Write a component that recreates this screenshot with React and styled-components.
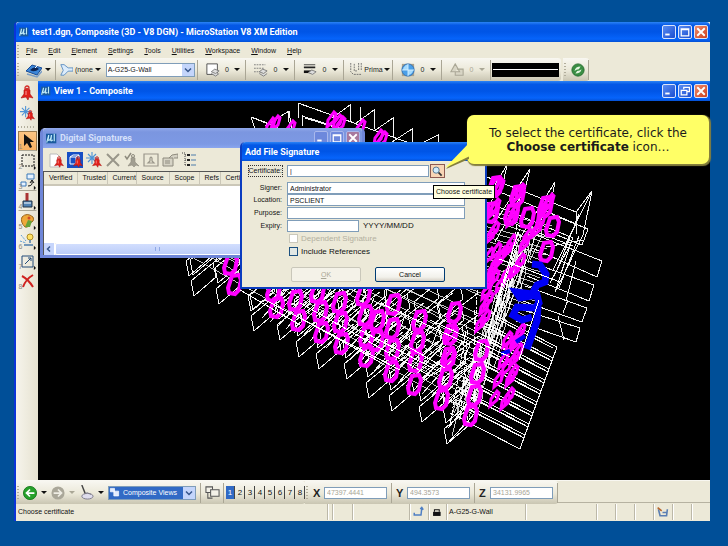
import React from "react";
import styled, { createGlobalStyle } from "styled-components";

const GlobalStyle = createGlobalStyle`
  * {
    box-sizing: border-box;
  }
  body {
    margin: 0;
    background: #004f98;
    font-family: "Liberation Sans", Arial, sans-serif;
    font-size: 8px;
    line-height: 10px;
    color: #111;
  }
  button,
  input,
  select {
    font: inherit;
    color: inherit;
    margin: 0;
    padding: 0;
  }
`;

const Desktop = styled.div`
  display: flex;
  min-height: 100vh;
  padding: 22px 18px 25px 14px;
`;

const AppWindow = styled.div`
  display: flex;
  flex-direction: column;
  flex: 1;
  min-width: 0;
  background: #ece9d8;
  border-left: 2px solid #0a34d8;
  border-radius: 4px 0 0 0;
`;

const TitleBar = styled.div`
  display: flex;
  align-items: center;
  gap: 3px;
  flex: none;
  height: ${(p) => p.$height || 20}px;
  padding: 0 2px 0 3px;
  color: ${(p) => (p.$inactive ? "#d6e0fa" : "#fff")};
  font-family: Roboto, "Noto Sans", sans-serif;
  font-size: 9px;
  font-weight: 700;
  line-height: 12px;
  white-space: nowrap;
  border-radius: ${(p) => (p.$square ? "0" : "4px 4px 0 0")};
  background: ${(p) =>
    p.$inactive
      ? "linear-gradient(#90a8ea, #7b96e0 20%, #7d99e4 80%, #8ba6ee)"
      : "linear-gradient(#2b84f6, #0458e6 16%, #0055e6 50%, #0664fb 85%, #0450d4)"};
`;

const TitleText = styled.span`
  flex: 1;
`;

const CaptionButton = styled.button`
  display: grid;
  place-items: center;
  width: 14px;
  height: 14px;
  border: 1px solid ${(p) => (p.$faded ? "#a9b8ec" : "#dbe5fb")};
  border-radius: 2px;
  background: ${(p) => {
    if (p.$close) return p.$faded ? "#a7799f" : "linear-gradient(135deg, #ef8c6c, #d0401f)";
    return p.$faded ? "#6d88dc" : "linear-gradient(135deg, #5a8df2, #1a4dd0)";
  }};
`;

const CaptionButtons = styled.div`
  display: flex;
  gap: 2px;
`;

const MenuBar = styled.nav`
  display: flex;
  align-items: center;
  height: 16px;
  padding-top: 2px;
  font-size: 7px;
`;

const MenuLinks = styled.div`
  display: flex;
  gap: 11px;
  padding-left: 6px;
`;

const MenuLink = styled.a`
  color: #111;
  text-decoration: none;
`;

const Grip = styled.span`
  flex: none;
  width: 2px;
  height: 13px;
  margin: 0 1px;
  background: repeating-linear-gradient(#b2ae9c 0 1px, transparent 1px 3px);
`;

const TopBar = styled.div`
  display: flex;
  gap: 2px;
  height: 23px;
`;

const Strip = styled.div`
  display: flex;
  align-items: center;
  height: 23px;
  border-radius: 0 3px 3px 0;
  background: linear-gradient(#f8f7f1, #ebe8d8 55%, #c9c5b2);
`;

const Group = styled.div`
  display: flex;
  align-items: center;
  width: ${(p) => p.$width}px;
  height: 20px;
  padding-left: ${(p) => p.$pad ?? 4}px;
  gap: ${(p) => p.$gap ?? 3}px;
  border-right: 1px solid #aaa695;
  color: ${(p) => (p.$off ? "#aaa796" : "#222")};
`;

const ToolButton = styled.button`
  display: flex;
  flex: ${(p) => (p.$grow ? "1" : "none")};
  align-items: center;
  justify-content: ${(p) => (p.$grow ? "space-evenly" : "center")};
  border: 0;
  background: none;
  white-space: nowrap;
  font-size: 7px;
`;

const Caret = styled.i`
  border: 3px solid transparent;
  border-top-color: ${(p) => (p.$off ? "#aaa796" : "#111")};
  border-bottom: 0;
`;

const SelectBox = styled.div`
  display: grid;
  grid-template-columns: 14px 1fr 12px;
  align-items: center;
  width: ${(p) => p.$width}px;
  height: 14px;
  border: 1px solid #7f9db9;
  background: ${(p) => (p.$picked ? "#316ac5" : "#fff")};
  color: ${(p) => (p.$picked ? "#fff" : "#222")};
  svg {
    grid-area: 1 / 1;
    pointer-events: none;
  }
  svg:last-child {
    grid-area: 1 / 3;
  }
`;

const Select = styled.select`
  grid-area: 1 / 1 / 2 / 4;
  width: 100%;
  height: 12px;
  padding-left: ${(p) => p.$pad || 1}px;
  border: 0;
  background: none;
  appearance: none;
  font-size: 7px;
`;

const LineStyle = styled.div`
  display: flex;
  align-items: center;
  width: 67px;
  height: 14px;
  margin: 0 2px 0 1px;
  padding: 0 1px;
  background: #000;
  &::after {
    content: "";
    flex: 1;
    height: 1px;
    background: #fff;
  }
`;

const Body = styled.div`
  display: flex;
  flex: 1;
`;

const Tools = styled.aside`
  display: flex;
  flex-direction: column;
  align-items: center;
  width: 22px;
  padding-top: 2px;
  background: linear-gradient(90deg, #f6f4ec, #e6e2d0);
`;

const Tool = styled.button`
  display: grid;
  align-items: center;
  justify-items: center;
  width: 19px;
  height: 20px;
  border: 1px solid ${(p) => (p.$active ? "#9a7a4d" : "transparent")};
  border-bottom-color: ${(p) => (p.$line || p.$active ? "#aaa695" : "transparent")};
  background: ${(p) => (p.$active ? "linear-gradient(#fcc583, #f9b162)" : "none")};
  svg {
    grid-area: 1 / 1;
  }
`;

const ToolNumber = styled.span`
  grid-area: 1 / 1;
  place-self: end start;
  font-size: 7px;
  line-height: 7px;
  color: #8d8a7c;
`;

const ToolGrip = styled.span`
  width: 18px;
  height: 2px;
  margin: 3px 0;
  background: repeating-linear-gradient(90deg, #b2ae9c 0 1px, transparent 1px 3px);
`;

const View = styled.main`
  position: relative;
  display: flex;
  flex-direction: column;
  flex: 1;
  min-width: 0;
  background: #000;
`;

const Drawing = styled.svg`
  flex: 1;
  width: 100%;
  min-height: 379px;
`;

const Dialog = styled.section`
  position: absolute;
  left: ${(p) => p.$left}px;
  top: ${(p) => p.$top}px;
  width: ${(p) => p.$width}px;
  border: solid ${(p) => (p.$inactive ? "#6f86d8" : "#0b3cc0")};
  border-width: 0 ${(p) => (p.$inactive ? "3px 3px" : "2px 2px")};
  border-radius: 5px 5px 0 0;
  background: #ece9d8;
`;

const SignatureTools = styled.div`
  display: flex;
  align-items: center;
  gap: 3px;
  height: 23px;
  padding: 0 5px;
`;

const ListBox = styled.div`
  height: 84px;
  border: 1px solid #555;
  border-width: 1px 0 0 1px;
  background: #fff;
  display: flex;
  flex-direction: column;
  justify-content: space-between;
`;

const HeaderTable = styled.table`
  width: 100%;
  border-collapse: collapse;
  table-layout: fixed;
  font-size: 7px;
  background: #ece9d8;
  border-bottom: 2px solid #cbc7b8;
`;

const HeaderCell = styled.th`
  width: ${(p) => p.$width}px;
  height: 13px;
  padding: 0 0 0 5px;
  overflow: hidden;
  font-weight: 400;
  text-align: left;
  border-right: 1px solid #cbc7b8;
`;

const ScrollBar = styled.div`
  display: flex;
  height: 12px;
  background: #f3f2ec;
`;

const ScrollEnd = styled.button`
  display: grid;
  place-items: center;
  width: 11px;
  border: 0;
  border-right: 1px solid #fff;
  background: #c6d5fc;
`;

const Thumb = styled.div`
  flex: 1;
  display: grid;
  place-items: center;
  border: 1px solid #fff;
  border-radius: 2px;
  background: linear-gradient(#d2defe, #bccdf9);
`;

const ThumbGrip = styled.span`
  width: 5px;
  height: 4px;
  margin-right: 102px;
  border: solid #8fa8e6;
  border-width: 0 1px;
`;

const Form = styled.form`
  padding: 3px 6px 5px 3px;
`;

const Field = styled.div`
  display: grid;
  grid-template-columns: 37px 1fr;
  align-items: center;
  gap: 5px;
  height: ${(p) => p.$height || 13}px;
  margin-bottom: ${(p) => p.$after || 0}px;
`;

const Label = styled.label`
  justify-self: end;
  font-size: 7px;
  white-space: nowrap;
  outline: ${(p) => (p.$focus ? "1px dotted #333" : "none")};
`;

const FieldBody = styled.div`
  display: flex;
  align-items: center;
  gap: 4px;
`;

const TextInput = styled.input`
  width: ${(p) => p.$width}px;
  height: 12px;
  padding: 0 2px;
  border: 1px solid #7f9db9;
  background: #fff;
  font-size: 7px;
  color: ${(p) => (p.$dim ? "#a8a595" : "#111")};
`;

const PickButton = styled.button`
  display: grid;
  place-items: center;
  width: 15px;
  height: 14px;
  margin-left: -3px;
  border: 1px solid #8d5a52;
  background: #f8d5b5;
`;

const CheckRow = styled.label`
  display: flex;
  align-items: center;
  gap: 3px;
  height: 13px;
  padding-left: 44px;
  color: ${(p) => (p.$off ? "#b3b0a0" : "#111")};
`;

const CheckBox = styled.input`
  appearance: none;
  width: 9px;
  height: 9px;
  border: 1px solid ${(p) => (p.disabled ? "#cac8bb" : "#1c5180")};
  background: ${(p) => (p.disabled ? "#fff" : "#e2e8e4")};
`;

const Actions = styled.div`
  display: flex;
  justify-content: center;
  gap: 14px;
  padding: 9px 0 0 12px;
`;

const ActionButton = styled.button`
  width: 70px;
  height: 15px;
  border: 1px solid ${(p) => (p.disabled ? "#c9c7ba" : "#003c74")};
  border-radius: 2px;
  background: ${(p) => (p.disabled ? "#f4f2e8" : "linear-gradient(#fff, #f2f1eb 70%, #d6d0c5)")};
  color: ${(p) => (p.disabled ? "#aaa796" : "#111")};
  font-size: 7px;
`;

const Tooltip = styled.div`
  position: absolute;
  left: 395px;
  top: 104px;
  padding: 1px 2px;
  border: 1px solid #000;
  background: #ffffe1;
  font-size: 7px;
  white-space: nowrap;
`;

const Callout = styled.div`
  position: absolute;
  left: 429px;
  top: 34px;
  width: 242px;
  padding: 11px 0 10px;
  border-radius: 7px;
  background: #ffff66;
  box-shadow: 1px 1px 1px 1px #857f3c;
  font-family: "DejaVu Sans", Verdana, sans-serif;
  font-size: 12px;
  line-height: 14px;
  text-align: center;
  color: #1b1b1b;
`;

const CalloutTail = styled.svg`
  position: absolute;
  left: 406px;
  top: 60px;
`;

const BottomBar = styled.div`
  display: flex;
  height: 23px;
  border-top: 1px solid #f8f7f1;
  border-bottom: 1px solid #b6b2a1;
`;

const ViewNumbers = styled.div`
  display: flex;
  gap: 1px;
  margin: 0 0 0 2px;
`;

const ViewNumber = styled.button`
  width: 9px;
  height: 13px;
  border: 0;
  border-right: 1px solid #444;
  background: ${(p) => (p.$on ? "#316ac5" : "none")};
  color: ${(p) => (p.$on ? "#fff" : "#111")};
`;

const AxisLabel = styled.label`
  width: 11px;
  font-size: 11px;
  font-weight: 700;
`;

const StatusBar = styled.footer`
  display: flex;
  align-items: center;
  height: 18px;
  padding-left: 2px;
  font-size: 7px;
`;

const StatusText = styled.span`
  flex: 1;
`;

const StatusCell = styled.span`
  display: grid;
  place-items: center start;
  width: ${(p) => p.$width}px;
  height: 16px;
  padding-left: 2px;
  border-left: 1px solid #bcb8a8;
  box-shadow: inset 1px 0 #fff;
`;

const bell = (
  <g>
    <path d="M2 13 5 9 5 5 8 3 11 5 11 9 14 13 10 12 9 15 7 12Z" fill="#e0201b" stroke="#a81210" strokeWidth=".6" />
    <circle cx="8" cy="3" r="2" fill="none" stroke="#d42a26" strokeWidth="1.3" />
    <path d="M7 6v4" stroke="#f99" />
  </g>
);
const smallBell = <g transform="translate(5 4) scale(.75)">{bell}</g>;
const burst = <path d="M6 0v12M0 6h12M2 2l8 8M10 2 2 10" stroke="#4d93d6" strokeWidth="1.1" />;

const icons = {
  app: (
    <g>
      <path d="M0 1h15v14H0z" fill="#1a5b9e" />
      <path d="M1 14 4 3M4 3 3 10c2 2 4-1 5-7M8 3l-1 8c1 1 2 0 3-1M12 1v11" fill="none" stroke="#bfeaf8" strokeWidth="1.7" />
    </g>
  ),
  model: (
    <g>
      <path d="m0 9 6-6 10 3-5 7z" fill="#3c86d8" stroke="#1a4c95" />
      <path d="m1 12 10 3 5-6" fill="none" stroke="#7b9ec6" strokeWidth="1.5" />
      <path d="M4 8q5-5 9-1-5 4-9 1" fill="#0c2454" />
      <path d="m9 6 3-3" stroke="#fff" />
    </g>
  ),
  tag: <path d="M1 2h4l5 4h6v4h-6l-5 5H1l3-6z" fill="#dcecfb" stroke="#4c82bd" />,
  level: (
    <g>
      <path d="M1 1h12v12H1z" fill="#fff" stroke="#444" />
      <path d="m6 10 4-3 5 2-4 3zM6 12l5 3 4-3" fill="#ddd" stroke="#777" />
    </g>
  ),
  dashes: (
    <g>
      <path d="M0 2h13M0 6h11M0 10h8" stroke="#777" strokeDasharray="2 1" />
      <path d="m6 10 4-3 5 2-4 3zM6 12l5 3 4-3" fill="#ddd" stroke="#777" />
    </g>
  ),
  weight: (
    <g>
      <path d="M1 2h13" stroke="#333" />
      <path d="M1 5h13" stroke="#222" strokeWidth="2" />
      <path d="M1 10h10" stroke="#111" strokeWidth="3" />
      <path d="m6 11 4-3 5 2-4 3z" fill="#ddd" stroke="#777" />
    </g>
  ),
  klass: <path d="M2 0v10l3 3h9M6 1v8h3M11 0v9M14 0v9" fill="none" stroke="#666" strokeDasharray="2 1" />,
  globe: (
    <g>
      <path d="M1 1h14v14H1z" fill="#a9a18c" />
      <circle cx="8" cy="8" r="7" fill="#4a9fe8" stroke="#2e6fb7" />
      <path d="M3 5q3-4 5-3v6H2zM8 8h6q-1 5-6 6z" fill="#a4dafd" />
      <path d="M8 1v14M1 8h14" stroke="#d8f0ff" />
    </g>
  ),
  priority: <path d="M6 1 1 10h10zM8 7h7v7H6v-4" fill="#d8d5c5" stroke="#aaa796" strokeWidth="1.2" />,
  refresh: (
    <g>
      <circle cx="8" cy="8" r="7" fill="#398d43" stroke="#246b2d" />
      <path d="M4 9q1-5 7-5L9 7q-3 0-5 2M12 7q-1 5-7 5l2-3q3 0 5-2" fill="#e3f6df" />
    </g>
  ),
  bell,
  place: (
    <g>
      {burst}
      {smallBell}
    </g>
  ),
  page: (
    <g>
      <path d="M2 2h7l3 3v10H2z" fill="#fff" stroke="#bbb" />
      {smallBell}
    </g>
  ),
  box: (
    <g>
      <path d="M0 0h16v16H0z" fill="#174fc5" />
      <path d="M3 5h6v7H3zM3 5l3-2h6v6l-3 3M9 5l3-2" fill="none" stroke="#fff" />
      {smallBell}
    </g>
  ),
  cross: <path d="m2 2 12 12M14 2 2 14" stroke="#99968a" strokeWidth="2" />,
  verify: (
    <g stroke="#8e8b7e" fill="#a19e91">
      <path d="m1 4 2 3 4-6" fill="none" strokeWidth="1.5" />
      <path d="m4 14 3-4V6l2-1 2 1v4l4 4-3-1-2 2-2-2z" strokeWidth=".6" />
      <circle cx="9" cy="4" r="1.5" fill="none" />
    </g>
  ),
  frame: <path d="M1 2h14v12H1zM5 11h6L9 9V6L8 5 7 6v3z" fill="none" stroke="#99968a" strokeWidth="1.2" />,
  hand: <path d="M1 6h10v8H1zM3 9h5M3 11h5M7 6l3-3 6-1v4h-4" fill="#d6d3c5" stroke="#8e8b7e" />,
  tree: (
    <g>
      <path d="M1 1h3v13M4 3h3M4 8h3M4 13h3" stroke="#444" strokeDasharray="1 1" />
      <path d="M6 2h3v2H6zM6 7h3v2H6zM6 12h3v2H6z" fill="#222" />
      <path d="M10 3h5M10 8h5M10 13h5" stroke="#4c7caa" />
    </g>
  ),
  arrow: <path d="M5 1v12l3-3 3 5 2-1-2-5h4z" fill="#111" />,
  fence: <path d="M3 2h12v11H3z" fill="none" stroke="#111" strokeDasharray="2 1" />,
  manip: (
    <g fill="none" stroke="#3a78b8">
      <path d="M8 1h7v5H8zM2 9h5v4H2z" fill="#e6f2ff" />
      <path d="M9 13q5 0 4-5m-2 2 2-3 2 3" stroke="#111" />
    </g>
  ),
  brush: (
    <g>
      <path d="M8 0v8" stroke="#a33" strokeWidth="3" />
      <path d="M4 8h9v6H4z" fill="#4f83b5" stroke="#234" />
      <path d="M5 10h7" stroke="#fff" />
    </g>
  ),
  palette: (
    <g>
      <path d="M3 4q5-5 11 0 2 5-4 6 0 5-4 4-5-5-3-10" fill="#efa83a" stroke="#9b651b" />
      <path d="m9 7 4 1-2 6H6z" fill="#66a239" />
      <circle cx="10" cy="5" r="1.5" fill="#cf4b27" />
    </g>
  ),
  bulb: (
    <g>
      <path d="M2 2l5 6M1 8l6 2" stroke="#5e9ed4" strokeDasharray="2 1" />
      <circle cx="11" cy="4" r="3" fill="#ffe267" stroke="#b18d22" />
      <path d="M11 7v3M5 12h9" stroke="#4c7caa" strokeWidth="1.5" />
    </g>
  ),
  measure: <path d="M3 3h11v11H3zM6 11l6-6M9 5h3v3" fill="none" stroke="#234b78" />,
  remove: <path d="M3 3q6 3 11 11M14 2Q7 6 4 14" fill="none" stroke="#cf2320" strokeWidth="2" />,
  flyout: <path d="M14 12v4l2-2z" fill="#111" />,
  search: (
    <g>
      <path d="m9 9 5 5" stroke="#333" strokeWidth="2.5" />
      <circle cx="6" cy="6" r="4.5" fill="#d1ecfb" stroke="#4a6d8a" strokeWidth="1.3" />
    </g>
  ),
  back: (
    <g>
      <circle cx="8" cy="8" r="7.5" fill="#26a12b" stroke="#15771a" />
      <path d="M13 8H4m4-4L4 8l4 4" stroke="#fff" strokeWidth="2" fill="none" />
    </g>
  ),
  forward: (
    <g>
      <circle cx="8" cy="8" r="7.5" fill="#aaa799" />
      <path d="M3 8h9M8 4l4 4-4 4" stroke="#efede4" strokeWidth="2" fill="none" />
    </g>
  ),
  pan: (
    <g fill="none" stroke="#7c7a89">
      <path d="M3 0 7 10" stroke="#444" strokeWidth="1.5" />
      <ellipse cx="9" cy="12" rx="6" ry="3" fill="#dfddec" />
      <path d="m8 8 5 2" />
    </g>
  ),
  views: (
    <g fill="#f3f1e8" stroke="#555" strokeWidth="1.1">
      <path d="M3 7v7h5" fill="none" />
      <path d="M1 2h7v6H1z" />
      <path d="M6 5h9v7H6z" />
    </g>
  ),
  viewsLight: <path d="M2 2h6v5H2zM7 6h7v7H7z" fill="#e2ecff" stroke="#fff" />,
  snap: <path d="M3 12h9l1-9M11 4l2-2 2 3M3 9v4" fill="none" stroke="#4f7fc4" strokeWidth="2" />,
  lock: (
    <g>
      <path d="M3 7h11v6H3z" fill="#111" />
      <path d="M5 7V4h7v3" fill="none" stroke="#111" strokeWidth="1.5" />
    </g>
  ),
  pen: (
    <g>
      <path d="M3 4l2 8h8l1-8M8 8h5" fill="none" stroke="#5b7fb3" strokeWidth="2" />
      <path d="M2 2l5 4" stroke="#b8662c" strokeWidth="2" />
    </g>
  ),
  down: (
    <g>
      <path d="M0 0h16v16H0z" fill="#c4d5fb" />
      <path d="m4 6 4 4 4-4" stroke="#36568c" strokeWidth="2" />
    </g>
  ),
  left: <path d="m10 3-5 5 5 5" fill="none" stroke="#36568c" strokeWidth="3" />,
  minimize: <path d="M2 12h7" stroke="#fff" strokeWidth="3" />,
  maximize: <path d="M2 3h12v11H2zM2 4h12" fill="none" stroke="#fff" strokeWidth="2" />,
  restore: <path d="M6 5V2h9v7h-3M2 7h9v7H2z" fill="none" stroke="#fff" strokeWidth="2" />,
  close: <path d="m2 2 12 12M14 2 2 14" stroke="#fff" strokeWidth="3" />,
};

const Icon = ({ name, size = 14 }) => (
  <svg width={size} height={size} viewBox="0 0 16 16" fill="none" aria-hidden="true">
    {icons[name]}
  </svg>
);

const WindowButtons = ({ middle = "maximize", faded }) => (
  <CaptionButtons>
    {["minimize", middle, "close"].map((name) => (
      <CaptionButton key={name} $close={name === "close"} $faded={faded} aria-label={name}>
        <Icon name={name} size={10} />
      </CaptionButton>
    ))}
  </CaptionButtons>
);

const menus = ["File", "Edit", "Element", "Settings", "Tools", "Utilities", "Workspace", "Window", "Help"];

const attributes = [
  { icon: "level", text: "0" },
  { icon: "dashes", text: "0" },
  { icon: "weight", text: "0" },
  { icon: "klass", text: "Prima" },
  { icon: "globe", text: "0" },
  { icon: "priority", text: "0", off: true },
];

const tools = [
  { icon: "arrow", active: true },
  { icon: "fence" },
  { icon: "manip", line: true },
  { icon: "brush", line: true },
  { icon: "palette" },
  { icon: "bulb" },
  { icon: "measure" },
  { icon: "remove" },
];

const columns = [
  ["Verified", 33],
  ["Trusted", 30],
  ["Current", 29],
  ["Source", 33],
  ["Scope", 30],
  ["Refs", 21],
  ["Certi", 20],
  ["", 122],
];

// Bottom corner of each wall panel along the front facade, and its floor count
const panels = [
  [189, 276, 1], [194, 296, 2], [219, 304, 3], [251, 311, 3], [254, 331, 4], [280, 340, 4],
  [299, 357, 5], [319, 369, 5], [347, 379, 5], [369, 398, 6], [392, 411, 6], [422, 422, 6], [447, 444, 7],
];

// Magenta window frames, one list for each facade bay
const frames = [
  [231, 264], [235, 284], [274, 291], [277, 307], [296, 300], [299, 320],
  [318, 292], [321, 311], [322, 332], [340, 302], [341, 322], [342, 343],
  [364, 295], [366, 315], [367, 336], [367, 356], [378, 320], [377, 340],
  [394, 304], [393, 328], [393, 349], [392, 371], [420, 320], [418, 341], [416, 361], [415, 384],
  [455, 312], [451, 334], [449, 357], [446, 378], [442, 399],
  [482, 350], [478, 373], [475, 395], [471, 415],
  [528, 217], [553, 226], [547, 251], [496, 186], [518, 195], [546, 206], [512, 214], [492, 212],
];

// Slanted frames seen nearly edge on
const slats = [
  [270, 126], [275, 124], [290, 129], [331, 120], [337, 123], [340, 125], [360, 128], [378, 138], [382, 140],
  [494, 186], [499, 187], [516, 196], [520, 192], [546, 206], [542, 211], [549, 202], [492, 211], [495, 207],
  [511, 219], [514, 212], [537, 229], [540, 222], [490, 236], [494, 230], [524, 244], [527, 237],
  [499, 260], [495, 264], [492, 270], [502, 255], [489, 283], [494, 278], [486, 292], [484, 307],
  [488, 300], [480, 324], [485, 318], [517, 338], [520, 332], [514, 344], [514, 359], [518, 352], [510, 379],
  [513, 373], [505, 402], [509, 396], [507, 340], [503, 361], [498, 380], [494, 399], [510, 345], [506, 368],
  [489, 256], [507, 250], [511, 243], [496, 251], [500, 285], [506, 275], [515, 270], [520, 262], [451, 334], [449, 357],
];

const peaks = [
  "M298 118V103L360 125V107M298 103 440 154M302 116l48 15M303 126l-1-11M305 118l42 13M251 117l5 15M251 117l27 10M251 117l37 15",
  "M265 126l24-15M288 111l2 21M289 111l3 20M350 121V105L332 118M374 129V110L356 123M393 137V118L374 131M412 143V129L392 142M438 152V135L422 143",
  "M486 200 507 165 503 184 480 218M495 222 530 169 525 189 495 242M520 238 555 182 551 203 515 262M553 270 592 191 583 235 556 290M592 191 576 212V234",
  "M487 177 576 212M488 187 574 223M487 202 573 238M553 215l35 14-6 16-30-12M487 213 573 246",
  "M536 235 602 261 597 277 532 248M530 262 594 285 589 301 527 276M525 286 587 308 582 322 520 300M520 309 580 328 576 342 516 321",
  "M546 247l37-7M559 288l20-52M555 292l18-55M566 301l10-40M563 313l5-13M564 340l-6-24M570 245l-20 38M579 214l-22 56",
];

const panelPath = panels
  .flatMap(([x, y, floors]) =>
    Array.from({ length: floors }, (_, i) => {
      const px = x - i;
      const py = y - i * 21;
      return `M${px} ${py}l-3-15 22-18 3 14zM${px + 19} ${py - 33}l16-12`;
    })
  )
  .join("");

const slopes = Array.from({ length: 34 }, (_, i) => {
  const k = i / 33;
  const x = 190 + k * 128 + ((i * 7) % 5) * 9;
  const y = 256 - k * 88 + ((i * 5) % 7);
  const ex = k < 0.5 ? 476 + k * 50 : 508 + k * 44;
  const ey = 416 - k * 190;
  return `M${Math.round(x)} ${Math.round(y)}L${Math.round(ex)} ${Math.round(ey)}`;
}).join("");

const rightEnds = Array.from({ length: 9 }, (_, i) => {
  const x = 557 - i * 4;
  const y = 347 + i * 11;
  return `M${x - 72} ${y - 37}L${x} ${y}l-5 14-70-36M${x - 60} ${y - 28}l56 29`;
}).join("");

// Near-parallel risers that bunch up toward the far corner
const risers = Array.from({ length: 48 }, (_, i) => {
  const k = i / 47;
  const x = Math.round(450 + k * 62 + ((i * 7) % 5) * 4);
  const y = Math.round(424 - k * 168);
  return `M${x} ${y}l${6 + (i % 3) * 3}-${24 + (i % 5) * 4}l2 12-${6 + (i % 4) * 2} 24`;
}).join("");

const diagonals = Array.from({ length: 24 }, (_, i) => {
  const x = 262 + i * 8;
  const y = 318 + Math.round(i * 3.8);
  return `M${x} ${y}l34-38 6-16M${x + 4} ${y - 23}l28-22`;
}).join("");

const Wireframe = () => (
  <Drawing viewBox="38 101 672 379" preserveAspectRatio="xMinYMin meet" fill="none" role="img" aria-label="Composite model">
    <g stroke="#f4f4f4" strokeWidth="1" shapeRendering="crispEdges">
      <path d={slopes} strokeWidth=".8" />
      <path d={panelPath} />
      <path d={rightEnds} />
      <path d={diagonals} />
      {peaks.map((d) => (
        <path key={d} d={d} />
      ))}
    </g>
    <g stroke="#fff" shapeRendering="crispEdges">
      <path d={risers} strokeWidth=".8" />
      <path d="M474 310V410M478 280l-7 120M468 330l-8 90M521 222l-20 90M517 225l-13 75M450 425l17-100" strokeDasharray="5 2 2 1" />
      <path d="M447 444l29-32M448 428l28-34" />
    </g>
    <g stroke="#ff00ff" strokeWidth="4">
      {frames.map(([x, y]) => (
        <path key={`${x}-${y}`} d={`M${x - 3} ${y - 8}l7-1 2 5-2 10-4 4-6-1-1-5z`} />
      ))}
      {slats.map(([x, y], i) => (
        <path key={i} d={`M${x - 4} ${y + 7}l1-7 6-8 2 2-2 7z`} strokeWidth="3" />
      ))}
    </g>
    <g stroke="#0000f4" strokeWidth="7">
      <path d="M532 264l8 1 6 9-1 8-8 3-5 9-16-2 4 6 17-3 2 8-4 5-18-1-4 8 9 5 10-3M538 305l-1 16-5 14-5 14" />
      <path d="M510 351l-9 3M525 336l-9 6" strokeWidth="4" />
    </g>
    <g stroke="#fff" shapeRendering="crispEdges">
      <path d="M405 345 445 368M430 320 510 357M380 303 470 345M300 303 430 376M265 300 400 370M499 259 560 282" />
      <path d="M240 290 300 325M300 318 380 362M360 330 440 372M498 300l20-68M494 315l16-50M488 335l14-52M539 300l-20 60" />
    </g>
  </Drawing>
);

const SignatureList = () => (
  <Dialog $left={2} $top={47} $width={325} $inactive aria-label="Digital Signatures">
    <TitleBar $inactive>
      <Icon name="app" size={11} />
      <TitleText>Digital Signatures</TitleText>
      <WindowButtons faded />
    </TitleBar>
    <SignatureTools>
      {["page", "box", "place", "cross", "verify", "frame", "hand", "tree"].map((name) => (
        <ToolButton key={name} aria-label={name}>
          <Icon name={name} size={16} />
        </ToolButton>
      ))}
    </SignatureTools>
    <ListBox>
      <HeaderTable>
        <thead>
          <tr>
            {columns.map(([name, width]) => (
              <HeaderCell key={name} $width={width}>
                {name}
              </HeaderCell>
            ))}
          </tr>
        </thead>
      </HeaderTable>
      <ScrollBar>
        <ScrollEnd aria-label="Scroll left">
          <Icon name="left" size={8} />
        </ScrollEnd>
        <Thumb>
          <ThumbGrip />
        </Thumb>
      </ScrollBar>
    </ListBox>
  </Dialog>
);

const AddSignature = () => (
  <Dialog $left={202} $top={61} $width={247} aria-label="Add File Signature">
    <TitleBar $height={19}>
      <TitleText>Add File Signature</TitleText>
    </TitleBar>
    <Form onSubmit={(e) => e.preventDefault()}>
      <Field $after={4} $height={14}>
        <Label htmlFor="certificate" $focus>Certificate:</Label>
        <FieldBody>
          <TextInput id="certificate" $width={142} defaultValue="|" />
          <PickButton type="button" aria-label="Choose certificate">
            <Icon name="search" size={11} />
          </PickButton>
        </FieldBody>
      </Field>
      <Field $height={12}>
        <Label htmlFor="signer">Signer:</Label>
        <TextInput id="signer" $width={178} defaultValue="Administrator" />
      </Field>
      <Field $height={12}>
        <Label htmlFor="location">Location:</Label>
        <TextInput id="location" $width={178} defaultValue="PSCLIENT" />
      </Field>
      <Field>
        <Label htmlFor="purpose">Purpose:</Label>
        <TextInput id="purpose" $width={178} />
      </Field>
      <Field>
        <Label htmlFor="expiry">Expiry:</Label>
        <FieldBody>
          <TextInput id="expiry" $width={72} />
          <span>YYYY/MM/DD</span>
        </FieldBody>
      </Field>
      <CheckRow $off>
        <CheckBox type="checkbox" disabled />
        Dependent Signature
      </CheckRow>
      <CheckRow>
        <CheckBox type="checkbox" />
        Include References
      </CheckRow>
      <Actions>
        <ActionButton disabled>
          <u>O</u>K
        </ActionButton>
        <ActionButton type="button">Cancel</ActionButton>
      </Actions>
    </Form>
  </Dialog>
);

const Axis = ({ name, value }) => (
  <Group $width={83} $pad={4} $gap={0}>
    <AxisLabel htmlFor={`axis-${name}`}>{name}</AxisLabel>
    <TextInput id={`axis-${name}`} $width={63} $dim defaultValue={value} />
  </Group>
);

const App = () => {
  return (
    <Desktop>
      <GlobalStyle />
      <AppWindow>
        <TitleBar>
          <Icon name="app" size={10} />
          <TitleText>test1.dgn, Composite (3D - V8 DGN) - MicroStation V8 XM Edition</TitleText>
          <WindowButtons />
        </TitleBar>
        <MenuBar>
          <Grip />
          <MenuLinks>
            {menus.map((name) => (
              <MenuLink key={name} href="#">
                <u>{name[0]}</u>
                {name.slice(1)}
              </MenuLink>
            ))}
          </MenuLinks>
        </MenuBar>
        <TopBar>
          <Strip>
            <Grip />
            <Group $width={36} $pad={2}>
              <ToolButton $grow aria-label="Models">
                <Icon name="model" size={16} />
                <Caret />
              </ToolButton>
            </Group>
            <Group $width={142} $gap={5}>
              <ToolButton>
                <Icon name="tag" size={13} />
                &nbsp;(none&nbsp;
                <Caret />
              </ToolButton>
              <SelectBox $width={89}>
                <Select aria-label="Active level">
                  <option>A-G25-G-Wall</option>
                </Select>
                <Icon name="down" size={12} />
              </SelectBox>
            </Group>
            {attributes.map((item) => (
              <Group key={item.icon} $width={item.icon === "level" ? 48 : 49} $off={item.off} $pad={3}>
                <ToolButton $grow aria-label={item.icon}>
                  <Icon name={item.icon} />
                  {item.text}
                  <Caret $off={item.off} />
                </ToolButton>
              </Group>
            ))}
            <LineStyle />
          </Strip>
          <Strip>
            <Grip />
            <Group $width={22}>
              <ToolButton aria-label="Refresh">
                <Icon name="refresh" />
              </ToolButton>
            </Group>
          </Strip>
        </TopBar>
        <Body>
          <Tools>
            <Tool aria-label="Signature">
              <Icon name="bell" size={16} />
            </Tool>
            <Tool aria-label="Place signature">
              <Icon name="place" size={15} />
            </Tool>
            <ToolGrip />
            {tools.map((item, i) => (
              <Tool key={item.icon} $active={item.active} $line={item.line} aria-label={`${i + 1} ${item.icon}`}>
                <Icon name={item.icon} size={16} />
                {i > 0 && i < 7 && <Icon name="flyout" size={17} />}
                <ToolNumber>{i + 1}</ToolNumber>
              </Tool>
            ))}
          </Tools>
          <View>
            <TitleBar $square>
              <Icon name="app" size={10} />
              <TitleText>View 1 - Composite</TitleText>
              <WindowButtons middle="restore" />
            </TitleBar>
            <Wireframe />
            <SignatureList />
            <AddSignature />
            <Tooltip role="tooltip">Choose certificate</Tooltip>
            <Callout>
              To select the certificate, click the
              <br />
              <b>Choose certificate</b> icon…
            </Callout>
            <CalloutTail width="26" height="30" viewBox="0 0 26 30">
              <path d="M24 4 2 28 25 18z" fill="#857f3c" />
              <path d="M26 1 1 27 26 15z" fill="#ffff66" />
            </CalloutTail>
          </View>
        </Body>
        <BottomBar>
          <Strip>
            <Grip />
            <Group $width={181} $pad={3} $gap={4}>
              <ToolButton aria-label="Back">
                <Icon name="back" />
              </ToolButton>
              <Caret />
              <ToolButton aria-label="Forward">
                <Icon name="forward" />
              </ToolButton>
              <Caret $off />
              <ToolButton aria-label="Pan">
                <Icon name="pan" size={15} />
              </ToolButton>
              <Caret />
              <SelectBox $width={88} $picked>
                <Icon name="viewsLight" size={11} />
                <Select aria-label="View group" $pad={14}>
                  <option>Composite Views</option>
                </Select>
                <Icon name="down" size={12} />
              </SelectBox>
            </Group>
            <Group $width={23}>
              <ToolButton aria-label="Manage view groups">
                <Icon name="views" size={15} />
              </ToolButton>
            </Group>
            <ViewNumbers>
              {[1, 2, 3, 4, 5, 6, 7, 8].map((n) => (
                <ViewNumber key={n} $on={n === 1}>
                  {n}
                </ViewNumber>
              ))}
            </ViewNumbers>
          </Strip>
          <Strip>
            <Grip />
            <Axis name="X" value="47397.4441" />
            <Axis name="Y" value="494.3573" />
            <Axis name="Z" value="34131.9965" />
          </Strip>
        </BottomBar>
        <StatusBar>
          <StatusText>Choose certificate</StatusText>
          <StatusCell $width={5} />
          <StatusCell $width={20} />
          <StatusCell $width={57} />
          <StatusCell $width={19}>
            <Icon name="snap" size={12} />
          </StatusCell>
          <StatusCell $width={18}>
            <Icon name="lock" size={11} />
          </StatusCell>
          <StatusCell $width={79}>A-G25-G-Wall</StatusCell>
          <StatusCell $width={71} />
          <StatusCell $width={19} />
          <StatusCell $width={19} />
          <StatusCell $width={19} />
          <StatusCell $width={19}>
            <Icon name="pen" size={13} />
          </StatusCell>
          <StatusCell $width={19} />
          <StatusCell $width={19} />
        </StatusBar>
      </AppWindow>
    </Desktop>
  );
};

export default App;
